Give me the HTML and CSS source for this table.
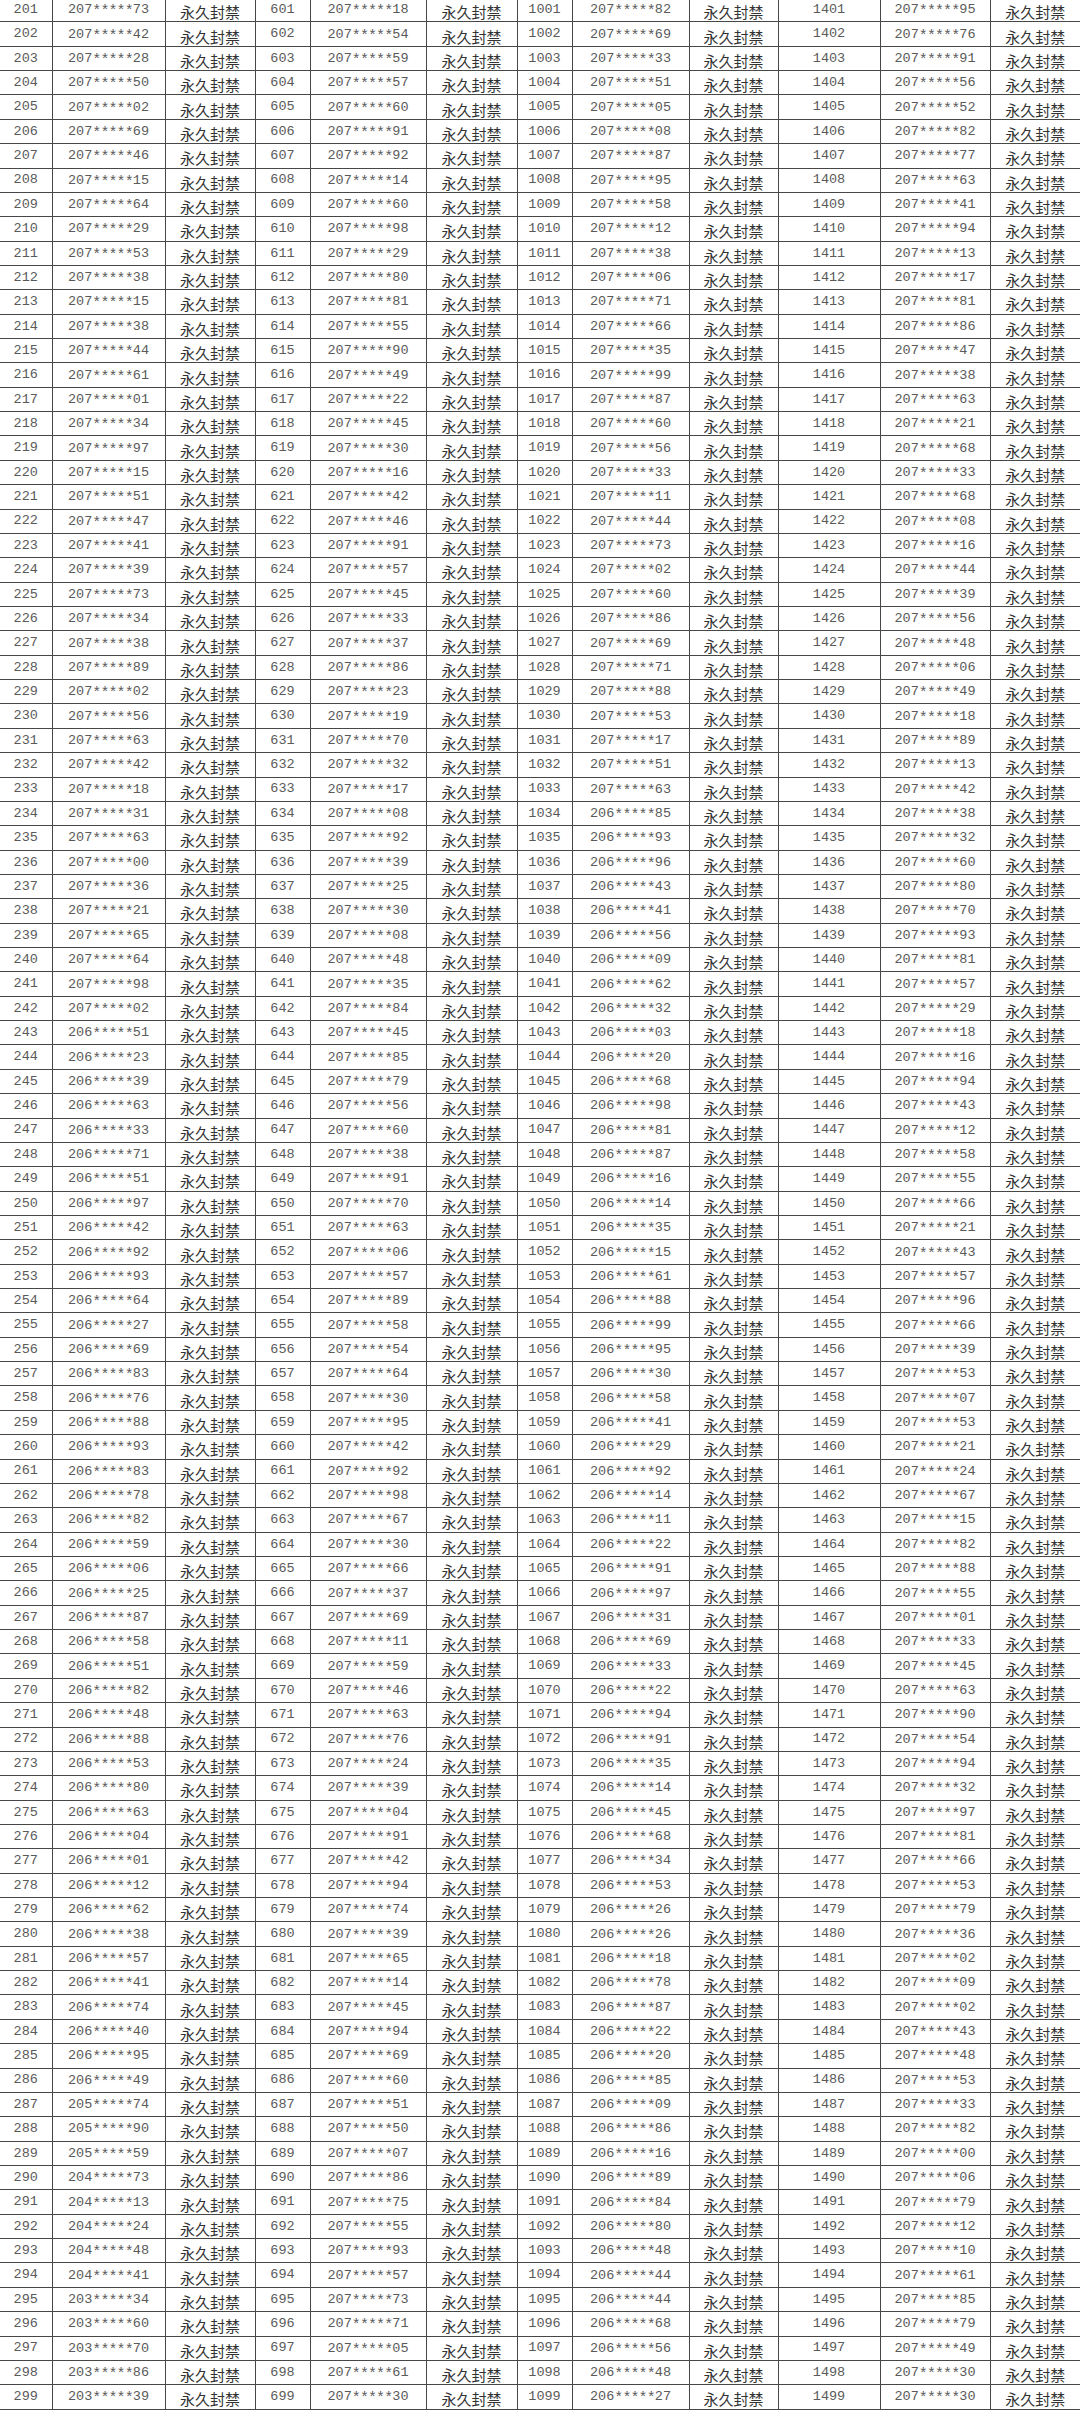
FILE: index.html
```html
<!DOCTYPE html>
<html lang="zh-CN">
<head>
<meta charset="utf-8">
<title>封禁名单</title>
<link rel="stylesheet" href="styles.css">
</head>
<body>
<table class="sheet">
<colgroup>
<col class="w-num1"><col class="w-id1"><col class="w-st1">
<col class="w-num2"><col class="w-id2"><col class="w-st2">
<col class="w-num3"><col class="w-id3"><col class="w-st3">
<col class="w-num4"><col class="w-id4"><col class="w-st4">
</colgroup>
<tbody>
<tr><td>201</td><td>207<i>*****</i>73</td><td>永久封禁</td><td>601</td><td>207<i>*****</i>18</td><td>永久封禁</td><td>1001</td><td>207<i>*****</i>82</td><td>永久封禁</td><td>1401</td><td>207<i>*****</i>95</td><td>永久封禁</td></tr>
<tr><td>202</td><td>207<i>*****</i>42</td><td>永久封禁</td><td>602</td><td>207<i>*****</i>54</td><td>永久封禁</td><td>1002</td><td>207<i>*****</i>69</td><td>永久封禁</td><td>1402</td><td>207<i>*****</i>76</td><td>永久封禁</td></tr>
<tr><td>203</td><td>207<i>*****</i>28</td><td>永久封禁</td><td>603</td><td>207<i>*****</i>59</td><td>永久封禁</td><td>1003</td><td>207<i>*****</i>33</td><td>永久封禁</td><td>1403</td><td>207<i>*****</i>91</td><td>永久封禁</td></tr>
<tr><td>204</td><td>207<i>*****</i>50</td><td>永久封禁</td><td>604</td><td>207<i>*****</i>57</td><td>永久封禁</td><td>1004</td><td>207<i>*****</i>51</td><td>永久封禁</td><td>1404</td><td>207<i>*****</i>56</td><td>永久封禁</td></tr>
<tr><td>205</td><td>207<i>*****</i>02</td><td>永久封禁</td><td>605</td><td>207<i>*****</i>60</td><td>永久封禁</td><td>1005</td><td>207<i>*****</i>05</td><td>永久封禁</td><td>1405</td><td>207<i>*****</i>52</td><td>永久封禁</td></tr>
<tr><td>206</td><td>207<i>*****</i>69</td><td>永久封禁</td><td>606</td><td>207<i>*****</i>91</td><td>永久封禁</td><td>1006</td><td>207<i>*****</i>08</td><td>永久封禁</td><td>1406</td><td>207<i>*****</i>82</td><td>永久封禁</td></tr>
<tr><td>207</td><td>207<i>*****</i>46</td><td>永久封禁</td><td>607</td><td>207<i>*****</i>92</td><td>永久封禁</td><td>1007</td><td>207<i>*****</i>87</td><td>永久封禁</td><td>1407</td><td>207<i>*****</i>77</td><td>永久封禁</td></tr>
<tr><td>208</td><td>207<i>*****</i>15</td><td>永久封禁</td><td>608</td><td>207<i>*****</i>14</td><td>永久封禁</td><td>1008</td><td>207<i>*****</i>95</td><td>永久封禁</td><td>1408</td><td>207<i>*****</i>63</td><td>永久封禁</td></tr>
<tr><td>209</td><td>207<i>*****</i>64</td><td>永久封禁</td><td>609</td><td>207<i>*****</i>60</td><td>永久封禁</td><td>1009</td><td>207<i>*****</i>58</td><td>永久封禁</td><td>1409</td><td>207<i>*****</i>41</td><td>永久封禁</td></tr>
<tr><td>210</td><td>207<i>*****</i>29</td><td>永久封禁</td><td>610</td><td>207<i>*****</i>98</td><td>永久封禁</td><td>1010</td><td>207<i>*****</i>12</td><td>永久封禁</td><td>1410</td><td>207<i>*****</i>94</td><td>永久封禁</td></tr>
<tr><td>211</td><td>207<i>*****</i>53</td><td>永久封禁</td><td>611</td><td>207<i>*****</i>29</td><td>永久封禁</td><td>1011</td><td>207<i>*****</i>38</td><td>永久封禁</td><td>1411</td><td>207<i>*****</i>13</td><td>永久封禁</td></tr>
<tr><td>212</td><td>207<i>*****</i>38</td><td>永久封禁</td><td>612</td><td>207<i>*****</i>80</td><td>永久封禁</td><td>1012</td><td>207<i>*****</i>06</td><td>永久封禁</td><td>1412</td><td>207<i>*****</i>17</td><td>永久封禁</td></tr>
<tr><td>213</td><td>207<i>*****</i>15</td><td>永久封禁</td><td>613</td><td>207<i>*****</i>81</td><td>永久封禁</td><td>1013</td><td>207<i>*****</i>71</td><td>永久封禁</td><td>1413</td><td>207<i>*****</i>81</td><td>永久封禁</td></tr>
<tr><td>214</td><td>207<i>*****</i>38</td><td>永久封禁</td><td>614</td><td>207<i>*****</i>55</td><td>永久封禁</td><td>1014</td><td>207<i>*****</i>66</td><td>永久封禁</td><td>1414</td><td>207<i>*****</i>86</td><td>永久封禁</td></tr>
<tr><td>215</td><td>207<i>*****</i>44</td><td>永久封禁</td><td>615</td><td>207<i>*****</i>90</td><td>永久封禁</td><td>1015</td><td>207<i>*****</i>35</td><td>永久封禁</td><td>1415</td><td>207<i>*****</i>47</td><td>永久封禁</td></tr>
<tr><td>216</td><td>207<i>*****</i>61</td><td>永久封禁</td><td>616</td><td>207<i>*****</i>49</td><td>永久封禁</td><td>1016</td><td>207<i>*****</i>99</td><td>永久封禁</td><td>1416</td><td>207<i>*****</i>38</td><td>永久封禁</td></tr>
<tr><td>217</td><td>207<i>*****</i>01</td><td>永久封禁</td><td>617</td><td>207<i>*****</i>22</td><td>永久封禁</td><td>1017</td><td>207<i>*****</i>87</td><td>永久封禁</td><td>1417</td><td>207<i>*****</i>63</td><td>永久封禁</td></tr>
<tr><td>218</td><td>207<i>*****</i>34</td><td>永久封禁</td><td>618</td><td>207<i>*****</i>45</td><td>永久封禁</td><td>1018</td><td>207<i>*****</i>60</td><td>永久封禁</td><td>1418</td><td>207<i>*****</i>21</td><td>永久封禁</td></tr>
<tr><td>219</td><td>207<i>*****</i>97</td><td>永久封禁</td><td>619</td><td>207<i>*****</i>30</td><td>永久封禁</td><td>1019</td><td>207<i>*****</i>56</td><td>永久封禁</td><td>1419</td><td>207<i>*****</i>68</td><td>永久封禁</td></tr>
<tr><td>220</td><td>207<i>*****</i>15</td><td>永久封禁</td><td>620</td><td>207<i>*****</i>16</td><td>永久封禁</td><td>1020</td><td>207<i>*****</i>33</td><td>永久封禁</td><td>1420</td><td>207<i>*****</i>33</td><td>永久封禁</td></tr>
<tr><td>221</td><td>207<i>*****</i>51</td><td>永久封禁</td><td>621</td><td>207<i>*****</i>42</td><td>永久封禁</td><td>1021</td><td>207<i>*****</i>11</td><td>永久封禁</td><td>1421</td><td>207<i>*****</i>68</td><td>永久封禁</td></tr>
<tr><td>222</td><td>207<i>*****</i>47</td><td>永久封禁</td><td>622</td><td>207<i>*****</i>46</td><td>永久封禁</td><td>1022</td><td>207<i>*****</i>44</td><td>永久封禁</td><td>1422</td><td>207<i>*****</i>08</td><td>永久封禁</td></tr>
<tr><td>223</td><td>207<i>*****</i>41</td><td>永久封禁</td><td>623</td><td>207<i>*****</i>91</td><td>永久封禁</td><td>1023</td><td>207<i>*****</i>73</td><td>永久封禁</td><td>1423</td><td>207<i>*****</i>16</td><td>永久封禁</td></tr>
<tr><td>224</td><td>207<i>*****</i>39</td><td>永久封禁</td><td>624</td><td>207<i>*****</i>57</td><td>永久封禁</td><td>1024</td><td>207<i>*****</i>02</td><td>永久封禁</td><td>1424</td><td>207<i>*****</i>44</td><td>永久封禁</td></tr>
<tr><td>225</td><td>207<i>*****</i>73</td><td>永久封禁</td><td>625</td><td>207<i>*****</i>45</td><td>永久封禁</td><td>1025</td><td>207<i>*****</i>60</td><td>永久封禁</td><td>1425</td><td>207<i>*****</i>39</td><td>永久封禁</td></tr>
<tr><td>226</td><td>207<i>*****</i>34</td><td>永久封禁</td><td>626</td><td>207<i>*****</i>33</td><td>永久封禁</td><td>1026</td><td>207<i>*****</i>86</td><td>永久封禁</td><td>1426</td><td>207<i>*****</i>56</td><td>永久封禁</td></tr>
<tr><td>227</td><td>207<i>*****</i>38</td><td>永久封禁</td><td>627</td><td>207<i>*****</i>37</td><td>永久封禁</td><td>1027</td><td>207<i>*****</i>69</td><td>永久封禁</td><td>1427</td><td>207<i>*****</i>48</td><td>永久封禁</td></tr>
<tr><td>228</td><td>207<i>*****</i>89</td><td>永久封禁</td><td>628</td><td>207<i>*****</i>86</td><td>永久封禁</td><td>1028</td><td>207<i>*****</i>71</td><td>永久封禁</td><td>1428</td><td>207<i>*****</i>06</td><td>永久封禁</td></tr>
<tr><td>229</td><td>207<i>*****</i>02</td><td>永久封禁</td><td>629</td><td>207<i>*****</i>23</td><td>永久封禁</td><td>1029</td><td>207<i>*****</i>88</td><td>永久封禁</td><td>1429</td><td>207<i>*****</i>49</td><td>永久封禁</td></tr>
<tr><td>230</td><td>207<i>*****</i>56</td><td>永久封禁</td><td>630</td><td>207<i>*****</i>19</td><td>永久封禁</td><td>1030</td><td>207<i>*****</i>53</td><td>永久封禁</td><td>1430</td><td>207<i>*****</i>18</td><td>永久封禁</td></tr>
<tr><td>231</td><td>207<i>*****</i>63</td><td>永久封禁</td><td>631</td><td>207<i>*****</i>70</td><td>永久封禁</td><td>1031</td><td>207<i>*****</i>17</td><td>永久封禁</td><td>1431</td><td>207<i>*****</i>89</td><td>永久封禁</td></tr>
<tr><td>232</td><td>207<i>*****</i>42</td><td>永久封禁</td><td>632</td><td>207<i>*****</i>32</td><td>永久封禁</td><td>1032</td><td>207<i>*****</i>51</td><td>永久封禁</td><td>1432</td><td>207<i>*****</i>13</td><td>永久封禁</td></tr>
<tr><td>233</td><td>207<i>*****</i>18</td><td>永久封禁</td><td>633</td><td>207<i>*****</i>17</td><td>永久封禁</td><td>1033</td><td>207<i>*****</i>63</td><td>永久封禁</td><td>1433</td><td>207<i>*****</i>42</td><td>永久封禁</td></tr>
<tr><td>234</td><td>207<i>*****</i>31</td><td>永久封禁</td><td>634</td><td>207<i>*****</i>08</td><td>永久封禁</td><td>1034</td><td>206<i>*****</i>85</td><td>永久封禁</td><td>1434</td><td>207<i>*****</i>38</td><td>永久封禁</td></tr>
<tr><td>235</td><td>207<i>*****</i>63</td><td>永久封禁</td><td>635</td><td>207<i>*****</i>92</td><td>永久封禁</td><td>1035</td><td>206<i>*****</i>93</td><td>永久封禁</td><td>1435</td><td>207<i>*****</i>32</td><td>永久封禁</td></tr>
<tr><td>236</td><td>207<i>*****</i>00</td><td>永久封禁</td><td>636</td><td>207<i>*****</i>39</td><td>永久封禁</td><td>1036</td><td>206<i>*****</i>96</td><td>永久封禁</td><td>1436</td><td>207<i>*****</i>60</td><td>永久封禁</td></tr>
<tr><td>237</td><td>207<i>*****</i>36</td><td>永久封禁</td><td>637</td><td>207<i>*****</i>25</td><td>永久封禁</td><td>1037</td><td>206<i>*****</i>43</td><td>永久封禁</td><td>1437</td><td>207<i>*****</i>80</td><td>永久封禁</td></tr>
<tr><td>238</td><td>207<i>*****</i>21</td><td>永久封禁</td><td>638</td><td>207<i>*****</i>30</td><td>永久封禁</td><td>1038</td><td>206<i>*****</i>41</td><td>永久封禁</td><td>1438</td><td>207<i>*****</i>70</td><td>永久封禁</td></tr>
<tr><td>239</td><td>207<i>*****</i>65</td><td>永久封禁</td><td>639</td><td>207<i>*****</i>08</td><td>永久封禁</td><td>1039</td><td>206<i>*****</i>56</td><td>永久封禁</td><td>1439</td><td>207<i>*****</i>93</td><td>永久封禁</td></tr>
<tr><td>240</td><td>207<i>*****</i>64</td><td>永久封禁</td><td>640</td><td>207<i>*****</i>48</td><td>永久封禁</td><td>1040</td><td>206<i>*****</i>09</td><td>永久封禁</td><td>1440</td><td>207<i>*****</i>81</td><td>永久封禁</td></tr>
<tr><td>241</td><td>207<i>*****</i>98</td><td>永久封禁</td><td>641</td><td>207<i>*****</i>35</td><td>永久封禁</td><td>1041</td><td>206<i>*****</i>62</td><td>永久封禁</td><td>1441</td><td>207<i>*****</i>57</td><td>永久封禁</td></tr>
<tr><td>242</td><td>207<i>*****</i>02</td><td>永久封禁</td><td>642</td><td>207<i>*****</i>84</td><td>永久封禁</td><td>1042</td><td>206<i>*****</i>32</td><td>永久封禁</td><td>1442</td><td>207<i>*****</i>29</td><td>永久封禁</td></tr>
<tr><td>243</td><td>206<i>*****</i>51</td><td>永久封禁</td><td>643</td><td>207<i>*****</i>45</td><td>永久封禁</td><td>1043</td><td>206<i>*****</i>03</td><td>永久封禁</td><td>1443</td><td>207<i>*****</i>18</td><td>永久封禁</td></tr>
<tr><td>244</td><td>206<i>*****</i>23</td><td>永久封禁</td><td>644</td><td>207<i>*****</i>85</td><td>永久封禁</td><td>1044</td><td>206<i>*****</i>20</td><td>永久封禁</td><td>1444</td><td>207<i>*****</i>16</td><td>永久封禁</td></tr>
<tr><td>245</td><td>206<i>*****</i>39</td><td>永久封禁</td><td>645</td><td>207<i>*****</i>79</td><td>永久封禁</td><td>1045</td><td>206<i>*****</i>68</td><td>永久封禁</td><td>1445</td><td>207<i>*****</i>94</td><td>永久封禁</td></tr>
<tr><td>246</td><td>206<i>*****</i>63</td><td>永久封禁</td><td>646</td><td>207<i>*****</i>56</td><td>永久封禁</td><td>1046</td><td>206<i>*****</i>98</td><td>永久封禁</td><td>1446</td><td>207<i>*****</i>43</td><td>永久封禁</td></tr>
<tr><td>247</td><td>206<i>*****</i>33</td><td>永久封禁</td><td>647</td><td>207<i>*****</i>60</td><td>永久封禁</td><td>1047</td><td>206<i>*****</i>81</td><td>永久封禁</td><td>1447</td><td>207<i>*****</i>12</td><td>永久封禁</td></tr>
<tr><td>248</td><td>206<i>*****</i>71</td><td>永久封禁</td><td>648</td><td>207<i>*****</i>38</td><td>永久封禁</td><td>1048</td><td>206<i>*****</i>87</td><td>永久封禁</td><td>1448</td><td>207<i>*****</i>58</td><td>永久封禁</td></tr>
<tr><td>249</td><td>206<i>*****</i>51</td><td>永久封禁</td><td>649</td><td>207<i>*****</i>91</td><td>永久封禁</td><td>1049</td><td>206<i>*****</i>16</td><td>永久封禁</td><td>1449</td><td>207<i>*****</i>55</td><td>永久封禁</td></tr>
<tr><td>250</td><td>206<i>*****</i>97</td><td>永久封禁</td><td>650</td><td>207<i>*****</i>70</td><td>永久封禁</td><td>1050</td><td>206<i>*****</i>14</td><td>永久封禁</td><td>1450</td><td>207<i>*****</i>66</td><td>永久封禁</td></tr>
<tr><td>251</td><td>206<i>*****</i>42</td><td>永久封禁</td><td>651</td><td>207<i>*****</i>63</td><td>永久封禁</td><td>1051</td><td>206<i>*****</i>35</td><td>永久封禁</td><td>1451</td><td>207<i>*****</i>21</td><td>永久封禁</td></tr>
<tr><td>252</td><td>206<i>*****</i>92</td><td>永久封禁</td><td>652</td><td>207<i>*****</i>06</td><td>永久封禁</td><td>1052</td><td>206<i>*****</i>15</td><td>永久封禁</td><td>1452</td><td>207<i>*****</i>43</td><td>永久封禁</td></tr>
<tr><td>253</td><td>206<i>*****</i>93</td><td>永久封禁</td><td>653</td><td>207<i>*****</i>57</td><td>永久封禁</td><td>1053</td><td>206<i>*****</i>61</td><td>永久封禁</td><td>1453</td><td>207<i>*****</i>57</td><td>永久封禁</td></tr>
<tr><td>254</td><td>206<i>*****</i>64</td><td>永久封禁</td><td>654</td><td>207<i>*****</i>89</td><td>永久封禁</td><td>1054</td><td>206<i>*****</i>88</td><td>永久封禁</td><td>1454</td><td>207<i>*****</i>96</td><td>永久封禁</td></tr>
<tr><td>255</td><td>206<i>*****</i>27</td><td>永久封禁</td><td>655</td><td>207<i>*****</i>58</td><td>永久封禁</td><td>1055</td><td>206<i>*****</i>99</td><td>永久封禁</td><td>1455</td><td>207<i>*****</i>66</td><td>永久封禁</td></tr>
<tr><td>256</td><td>206<i>*****</i>69</td><td>永久封禁</td><td>656</td><td>207<i>*****</i>54</td><td>永久封禁</td><td>1056</td><td>206<i>*****</i>95</td><td>永久封禁</td><td>1456</td><td>207<i>*****</i>39</td><td>永久封禁</td></tr>
<tr><td>257</td><td>206<i>*****</i>83</td><td>永久封禁</td><td>657</td><td>207<i>*****</i>64</td><td>永久封禁</td><td>1057</td><td>206<i>*****</i>30</td><td>永久封禁</td><td>1457</td><td>207<i>*****</i>53</td><td>永久封禁</td></tr>
<tr><td>258</td><td>206<i>*****</i>76</td><td>永久封禁</td><td>658</td><td>207<i>*****</i>30</td><td>永久封禁</td><td>1058</td><td>206<i>*****</i>58</td><td>永久封禁</td><td>1458</td><td>207<i>*****</i>07</td><td>永久封禁</td></tr>
<tr><td>259</td><td>206<i>*****</i>88</td><td>永久封禁</td><td>659</td><td>207<i>*****</i>95</td><td>永久封禁</td><td>1059</td><td>206<i>*****</i>41</td><td>永久封禁</td><td>1459</td><td>207<i>*****</i>53</td><td>永久封禁</td></tr>
<tr><td>260</td><td>206<i>*****</i>93</td><td>永久封禁</td><td>660</td><td>207<i>*****</i>42</td><td>永久封禁</td><td>1060</td><td>206<i>*****</i>29</td><td>永久封禁</td><td>1460</td><td>207<i>*****</i>21</td><td>永久封禁</td></tr>
<tr><td>261</td><td>206<i>*****</i>83</td><td>永久封禁</td><td>661</td><td>207<i>*****</i>92</td><td>永久封禁</td><td>1061</td><td>206<i>*****</i>92</td><td>永久封禁</td><td>1461</td><td>207<i>*****</i>24</td><td>永久封禁</td></tr>
<tr><td>262</td><td>206<i>*****</i>78</td><td>永久封禁</td><td>662</td><td>207<i>*****</i>98</td><td>永久封禁</td><td>1062</td><td>206<i>*****</i>14</td><td>永久封禁</td><td>1462</td><td>207<i>*****</i>67</td><td>永久封禁</td></tr>
<tr><td>263</td><td>206<i>*****</i>82</td><td>永久封禁</td><td>663</td><td>207<i>*****</i>67</td><td>永久封禁</td><td>1063</td><td>206<i>*****</i>11</td><td>永久封禁</td><td>1463</td><td>207<i>*****</i>15</td><td>永久封禁</td></tr>
<tr><td>264</td><td>206<i>*****</i>59</td><td>永久封禁</td><td>664</td><td>207<i>*****</i>30</td><td>永久封禁</td><td>1064</td><td>206<i>*****</i>22</td><td>永久封禁</td><td>1464</td><td>207<i>*****</i>82</td><td>永久封禁</td></tr>
<tr><td>265</td><td>206<i>*****</i>06</td><td>永久封禁</td><td>665</td><td>207<i>*****</i>66</td><td>永久封禁</td><td>1065</td><td>206<i>*****</i>91</td><td>永久封禁</td><td>1465</td><td>207<i>*****</i>88</td><td>永久封禁</td></tr>
<tr><td>266</td><td>206<i>*****</i>25</td><td>永久封禁</td><td>666</td><td>207<i>*****</i>37</td><td>永久封禁</td><td>1066</td><td>206<i>*****</i>97</td><td>永久封禁</td><td>1466</td><td>207<i>*****</i>55</td><td>永久封禁</td></tr>
<tr><td>267</td><td>206<i>*****</i>87</td><td>永久封禁</td><td>667</td><td>207<i>*****</i>69</td><td>永久封禁</td><td>1067</td><td>206<i>*****</i>31</td><td>永久封禁</td><td>1467</td><td>207<i>*****</i>01</td><td>永久封禁</td></tr>
<tr><td>268</td><td>206<i>*****</i>58</td><td>永久封禁</td><td>668</td><td>207<i>*****</i>11</td><td>永久封禁</td><td>1068</td><td>206<i>*****</i>69</td><td>永久封禁</td><td>1468</td><td>207<i>*****</i>33</td><td>永久封禁</td></tr>
<tr><td>269</td><td>206<i>*****</i>51</td><td>永久封禁</td><td>669</td><td>207<i>*****</i>59</td><td>永久封禁</td><td>1069</td><td>206<i>*****</i>33</td><td>永久封禁</td><td>1469</td><td>207<i>*****</i>45</td><td>永久封禁</td></tr>
<tr><td>270</td><td>206<i>*****</i>82</td><td>永久封禁</td><td>670</td><td>207<i>*****</i>46</td><td>永久封禁</td><td>1070</td><td>206<i>*****</i>22</td><td>永久封禁</td><td>1470</td><td>207<i>*****</i>63</td><td>永久封禁</td></tr>
<tr><td>271</td><td>206<i>*****</i>48</td><td>永久封禁</td><td>671</td><td>207<i>*****</i>63</td><td>永久封禁</td><td>1071</td><td>206<i>*****</i>94</td><td>永久封禁</td><td>1471</td><td>207<i>*****</i>90</td><td>永久封禁</td></tr>
<tr><td>272</td><td>206<i>*****</i>88</td><td>永久封禁</td><td>672</td><td>207<i>*****</i>76</td><td>永久封禁</td><td>1072</td><td>206<i>*****</i>91</td><td>永久封禁</td><td>1472</td><td>207<i>*****</i>54</td><td>永久封禁</td></tr>
<tr><td>273</td><td>206<i>*****</i>53</td><td>永久封禁</td><td>673</td><td>207<i>*****</i>24</td><td>永久封禁</td><td>1073</td><td>206<i>*****</i>35</td><td>永久封禁</td><td>1473</td><td>207<i>*****</i>94</td><td>永久封禁</td></tr>
<tr><td>274</td><td>206<i>*****</i>80</td><td>永久封禁</td><td>674</td><td>207<i>*****</i>39</td><td>永久封禁</td><td>1074</td><td>206<i>*****</i>14</td><td>永久封禁</td><td>1474</td><td>207<i>*****</i>32</td><td>永久封禁</td></tr>
<tr><td>275</td><td>206<i>*****</i>63</td><td>永久封禁</td><td>675</td><td>207<i>*****</i>04</td><td>永久封禁</td><td>1075</td><td>206<i>*****</i>45</td><td>永久封禁</td><td>1475</td><td>207<i>*****</i>97</td><td>永久封禁</td></tr>
<tr><td>276</td><td>206<i>*****</i>04</td><td>永久封禁</td><td>676</td><td>207<i>*****</i>91</td><td>永久封禁</td><td>1076</td><td>206<i>*****</i>68</td><td>永久封禁</td><td>1476</td><td>207<i>*****</i>81</td><td>永久封禁</td></tr>
<tr><td>277</td><td>206<i>*****</i>01</td><td>永久封禁</td><td>677</td><td>207<i>*****</i>42</td><td>永久封禁</td><td>1077</td><td>206<i>*****</i>34</td><td>永久封禁</td><td>1477</td><td>207<i>*****</i>66</td><td>永久封禁</td></tr>
<tr><td>278</td><td>206<i>*****</i>12</td><td>永久封禁</td><td>678</td><td>207<i>*****</i>94</td><td>永久封禁</td><td>1078</td><td>206<i>*****</i>53</td><td>永久封禁</td><td>1478</td><td>207<i>*****</i>53</td><td>永久封禁</td></tr>
<tr><td>279</td><td>206<i>*****</i>62</td><td>永久封禁</td><td>679</td><td>207<i>*****</i>74</td><td>永久封禁</td><td>1079</td><td>206<i>*****</i>26</td><td>永久封禁</td><td>1479</td><td>207<i>*****</i>79</td><td>永久封禁</td></tr>
<tr><td>280</td><td>206<i>*****</i>38</td><td>永久封禁</td><td>680</td><td>207<i>*****</i>39</td><td>永久封禁</td><td>1080</td><td>206<i>*****</i>26</td><td>永久封禁</td><td>1480</td><td>207<i>*****</i>36</td><td>永久封禁</td></tr>
<tr><td>281</td><td>206<i>*****</i>57</td><td>永久封禁</td><td>681</td><td>207<i>*****</i>65</td><td>永久封禁</td><td>1081</td><td>206<i>*****</i>18</td><td>永久封禁</td><td>1481</td><td>207<i>*****</i>02</td><td>永久封禁</td></tr>
<tr><td>282</td><td>206<i>*****</i>41</td><td>永久封禁</td><td>682</td><td>207<i>*****</i>14</td><td>永久封禁</td><td>1082</td><td>206<i>*****</i>78</td><td>永久封禁</td><td>1482</td><td>207<i>*****</i>09</td><td>永久封禁</td></tr>
<tr><td>283</td><td>206<i>*****</i>74</td><td>永久封禁</td><td>683</td><td>207<i>*****</i>45</td><td>永久封禁</td><td>1083</td><td>206<i>*****</i>87</td><td>永久封禁</td><td>1483</td><td>207<i>*****</i>02</td><td>永久封禁</td></tr>
<tr><td>284</td><td>206<i>*****</i>40</td><td>永久封禁</td><td>684</td><td>207<i>*****</i>94</td><td>永久封禁</td><td>1084</td><td>206<i>*****</i>22</td><td>永久封禁</td><td>1484</td><td>207<i>*****</i>43</td><td>永久封禁</td></tr>
<tr><td>285</td><td>206<i>*****</i>95</td><td>永久封禁</td><td>685</td><td>207<i>*****</i>69</td><td>永久封禁</td><td>1085</td><td>206<i>*****</i>20</td><td>永久封禁</td><td>1485</td><td>207<i>*****</i>48</td><td>永久封禁</td></tr>
<tr><td>286</td><td>206<i>*****</i>49</td><td>永久封禁</td><td>686</td><td>207<i>*****</i>60</td><td>永久封禁</td><td>1086</td><td>206<i>*****</i>85</td><td>永久封禁</td><td>1486</td><td>207<i>*****</i>53</td><td>永久封禁</td></tr>
<tr><td>287</td><td>205<i>*****</i>74</td><td>永久封禁</td><td>687</td><td>207<i>*****</i>51</td><td>永久封禁</td><td>1087</td><td>206<i>*****</i>09</td><td>永久封禁</td><td>1487</td><td>207<i>*****</i>33</td><td>永久封禁</td></tr>
<tr><td>288</td><td>205<i>*****</i>90</td><td>永久封禁</td><td>688</td><td>207<i>*****</i>50</td><td>永久封禁</td><td>1088</td><td>206<i>*****</i>86</td><td>永久封禁</td><td>1488</td><td>207<i>*****</i>82</td><td>永久封禁</td></tr>
<tr><td>289</td><td>205<i>*****</i>59</td><td>永久封禁</td><td>689</td><td>207<i>*****</i>07</td><td>永久封禁</td><td>1089</td><td>206<i>*****</i>16</td><td>永久封禁</td><td>1489</td><td>207<i>*****</i>00</td><td>永久封禁</td></tr>
<tr><td>290</td><td>204<i>*****</i>73</td><td>永久封禁</td><td>690</td><td>207<i>*****</i>86</td><td>永久封禁</td><td>1090</td><td>206<i>*****</i>89</td><td>永久封禁</td><td>1490</td><td>207<i>*****</i>06</td><td>永久封禁</td></tr>
<tr><td>291</td><td>204<i>*****</i>13</td><td>永久封禁</td><td>691</td><td>207<i>*****</i>75</td><td>永久封禁</td><td>1091</td><td>206<i>*****</i>84</td><td>永久封禁</td><td>1491</td><td>207<i>*****</i>79</td><td>永久封禁</td></tr>
<tr><td>292</td><td>204<i>*****</i>24</td><td>永久封禁</td><td>692</td><td>207<i>*****</i>55</td><td>永久封禁</td><td>1092</td><td>206<i>*****</i>80</td><td>永久封禁</td><td>1492</td><td>207<i>*****</i>12</td><td>永久封禁</td></tr>
<tr><td>293</td><td>204<i>*****</i>48</td><td>永久封禁</td><td>693</td><td>207<i>*****</i>93</td><td>永久封禁</td><td>1093</td><td>206<i>*****</i>48</td><td>永久封禁</td><td>1493</td><td>207<i>*****</i>10</td><td>永久封禁</td></tr>
<tr><td>294</td><td>204<i>*****</i>41</td><td>永久封禁</td><td>694</td><td>207<i>*****</i>57</td><td>永久封禁</td><td>1094</td><td>206<i>*****</i>44</td><td>永久封禁</td><td>1494</td><td>207<i>*****</i>61</td><td>永久封禁</td></tr>
<tr><td>295</td><td>203<i>*****</i>34</td><td>永久封禁</td><td>695</td><td>207<i>*****</i>73</td><td>永久封禁</td><td>1095</td><td>206<i>*****</i>44</td><td>永久封禁</td><td>1495</td><td>207<i>*****</i>85</td><td>永久封禁</td></tr>
<tr><td>296</td><td>203<i>*****</i>60</td><td>永久封禁</td><td>696</td><td>207<i>*****</i>71</td><td>永久封禁</td><td>1096</td><td>206<i>*****</i>68</td><td>永久封禁</td><td>1496</td><td>207<i>*****</i>79</td><td>永久封禁</td></tr>
<tr><td>297</td><td>203<i>*****</i>70</td><td>永久封禁</td><td>697</td><td>207<i>*****</i>05</td><td>永久封禁</td><td>1097</td><td>206<i>*****</i>56</td><td>永久封禁</td><td>1497</td><td>207<i>*****</i>49</td><td>永久封禁</td></tr>
<tr><td>298</td><td>203<i>*****</i>86</td><td>永久封禁</td><td>698</td><td>207<i>*****</i>61</td><td>永久封禁</td><td>1098</td><td>206<i>*****</i>48</td><td>永久封禁</td><td>1498</td><td>207<i>*****</i>30</td><td>永久封禁</td></tr>
<tr><td>299</td><td>203<i>*****</i>39</td><td>永久封禁</td><td>699</td><td>207<i>*****</i>30</td><td>永久封禁</td><td>1099</td><td>206<i>*****</i>27</td><td>永久封禁</td><td>1499</td><td>207<i>*****</i>30</td><td>永久封禁</td></tr>
</tbody>
</table>
</body>
</html>
```

FILE: styles.css
```css
html, body {
  margin: 0;
  padding: 0;
  background: #ffffff;
}

.sheet {
  border-collapse: collapse;
  table-layout: fixed;
  width: 1080px;
  margin-top: -3px;
}

.w-num1 { width: 52px; }
.w-id1  { width: 113px; }
.w-st1  { width: 90px; }
.w-num2 { width: 55px; }
.w-id2  { width: 116px; }
.w-st2  { width: 91px; }
.w-num3 { width: 55px; }
.w-id3  { width: 117px; }
.w-st3  { width: 89px; }
.w-num4 { width: 102px; }
.w-id4  { width: 110px; }
.w-st4  { width: 90px; }

.sheet tr {
  height: 24.37px;
}

.sheet td {
  padding: 0;
  border: 1px solid #474747;
  text-align: center;
  vertical-align: middle;
  white-space: nowrap;
  overflow: hidden;
  font-family: "Liberation Mono", "DejaVu Sans Mono", monospace;
  font-size: 13.5px;
  line-height: 1;
  color: #5a5a5a;
}

/* masked middle digits: asterisks sit on the digit mid-line */
.sheet td i {
  font-style: normal;
  display: inline-block;
  font-size: 15px;
  letter-spacing: -0.9px;
  transform: translateY(2px);
}

.sheet td:nth-child(3n) {
  font-family: "Noto Sans CJK SC", "Noto Sans", sans-serif;
  font-size: 15px;
  color: #333333;
  padding-top: 4px;
}

.sheet td:first-child {
  border-left: none;
}

.sheet td:last-child {
  border-right: none;
}
```
